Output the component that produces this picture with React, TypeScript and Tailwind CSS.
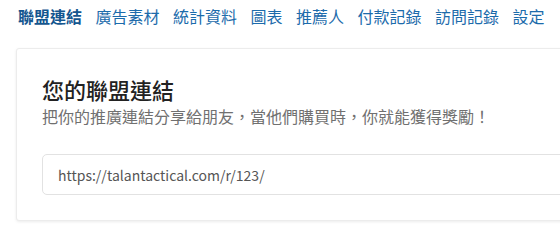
export default function App() {
  const tabs = ["聯盟連結", "廣告素材", "統計資料", "圖表", "推薦人", "付款記錄", "訪問記錄", "設定"]

  return (
    <div className="min-h-[225px] overflow-hidden bg-white font-['Noto_Sans_CJK_TC',sans-serif]">
      {/* Tabs */}
      <nav className="flex gap-[13.5px] whitespace-nowrap pl-[18px] pt-[4px] text-[16px] leading-[24px]">
        {tabs.map((t, i) => (
          <a
            key={t}
            href="#"
            className={i === 0 ? "font-bold text-[#14568f]" : "text-[#1c6bab]"}
          >
            {t}
          </a>
        ))}
      </nav>

      {/* Affiliate link card */}
      <div className="ml-[16px] mt-[20px] w-[620px] rounded-[3px] border border-[#ececec] bg-white px-[25px] pb-[25px] pt-[25px] shadow-[0_1px_3px_rgba(0,0,0,0.08)]">
        <h2 className="text-[22px] font-medium leading-[31px] text-[#222]">您的聯盟連結</h2>
        <p className="text-[16px] leading-[22px] text-[#707070]">
          把你的推廣連結分享給朋友，當他們購買時，你就能獲得獎勵！
        </p>
        <input
          readOnly
          value="https://talantactical.com/r/123/"
          className="mt-[27px] block h-[41px] w-full rounded-[5px] border border-[#e2e2e2] bg-white px-[15px] text-[14px] text-[#555] outline-none"
        />
      </div>
    </div>
  )
}
